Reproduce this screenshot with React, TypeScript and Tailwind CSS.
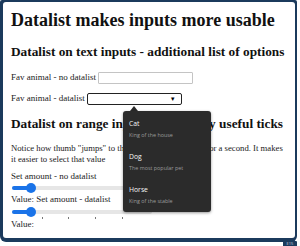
import React from 'react';

const serif = { fontFamily: '"Liberation Serif", "Times New Roman", Times, serif' };
const sans = { fontFamily: '"Open Sans", "Noto Sans", Arial, sans-serif' };

function Slider({ ticks }: { ticks?: boolean }) {
  return (
    <div className="ml-[1px]">
      <div className="relative h-[10px] w-[140px]">
        <div className="absolute left-0 right-0 top-[3px] h-[4px] rounded-full bg-[#e6e6e6]" />
        <div className="absolute left-0 top-[3px] h-[4px] w-[18px] rounded-full bg-[#1a73e8]" />
        <div className="absolute left-[14px] top-[0px] h-[10px] w-[10px] rounded-full bg-[#1a73e8]" />
      </div>
      {ticks && (
        <div className="relative h-[2px] w-[140px]">
          {[30, 56, 83, 110].map((x) => (
            <div key={x} className="absolute top-0 h-[2px] w-[1px] bg-[#777]" style={{ left: x }} />
          ))}
        </div>
      )}
    </div>
  );
}

export default function App() {
  const options = [
    { name: 'Cat', desc: 'King of the house' },
    { name: 'Dog', desc: 'The most popular pet' },
    { name: 'Horse', desc: 'King of the stable' },
  ];

  return (
    <div className="relative h-[246px] w-[300px] overflow-hidden bg-white">
      <div className="h-[242px] w-[297px] rounded-b-[6px] rounded-t-[2px] bg-[#1b3a5c] pb-[4px] pl-[3px] pr-[2px] pt-[2px]">
        <div className="h-full w-full overflow-hidden rounded-[3px] bg-white pl-[8px] pt-[6px] text-[#111]" style={serif}>
          <h1 className="whitespace-nowrap text-[18px] font-bold leading-[24px]" style={serif}>
            Datalist makes inputs more usable
          </h1>
          <h2 className="mt-[11px] whitespace-nowrap text-[13.3px] font-bold leading-[18px]" style={serif}>
            Datalist on text inputs - additional list of options
          </h2>

          <div className="mt-[10px] flex h-[13px] items-center gap-[2px] text-[9px] text-[#222]">
            <span className="whitespace-nowrap">Fav animal - no datalist</span>
            <div className="h-[12px] w-[95px] rounded-[1px] border border-[#c4c4c4] bg-white" />
          </div>

          <div className="mt-[9px] flex h-[12px] items-center gap-[2px] text-[9px] text-[#222]">
            <span className="whitespace-nowrap">Fav animal - datalist</span>
            <div className="flex h-[12px] w-[95px] items-center justify-end rounded-[2px] border border-[#222] bg-white pr-[5px]">
              <span className="text-[6px] leading-none text-black" style={sans}>▼</span>
            </div>
          </div>

          <h2 className="mt-[10px] whitespace-nowrap text-[13.3px] font-bold leading-[18px]" style={serif}>
            Datalist on range inputs - incredibly useful ticks
          </h2>

          <p className="mt-[10px] text-[8.7px] leading-[11px] text-[#222]">
            <span className="block whitespace-nowrap">
              Notice how thumb "jumps" to the nearest tick and stays for a second. It makes
            </span>
            <span className="block whitespace-nowrap">it easier to select that value</span>
          </p>

          <div className="mt-[6px] text-[9px] leading-[11px] text-[#222]">Set amount - no datalist</div>
          <div className="mt-[1px]">
            <Slider />
          </div>
          <div className="mt-[1px] text-[9px] leading-[11px] text-[#222]">Value: Set amount - datalist</div>
          <div className="mt-[2px]">
            <Slider ticks />
          </div>
          <div className="text-[9px] leading-[11px] text-[#222]">Value:</div>
        </div>
      </div>

      {/* datalist dropdown */}
      <div className="absolute left-[130px] top-[106px] h-0 w-0 border-b-[5px] border-l-[4px] border-r-[4px] border-b-[#2b2b2b] border-l-transparent border-r-transparent" />
      <div className="absolute left-[123px] top-[111px] h-[101px] w-[88px] rounded-[3px] bg-[#2b2b2b] pl-[6px] pt-[8px] shadow-[0_1px_3px_rgba(0,0,0,0.4)]" style={sans}>
        {options.map((o) => (
          <div key={o.name} className="mb-[12px]">
            <div className="text-[6.8px] leading-[9px] text-[#f5f5f5]">{o.name}</div>
            <div className="mt-[3px] whitespace-nowrap text-[5.4px] leading-[9px] text-[#9c9c9c]">{o.desc}</div>
          </div>
        ))}
      </div>

      <div className="absolute left-[283px] top-[241px] flex h-[5px] w-[14px] items-center justify-center rounded-t-[1px] bg-[#1b3a5c] text-[4px] leading-none text-[#cfd8e3]" style={sans}>
        E15
      </div>
    </div>
  );
}
